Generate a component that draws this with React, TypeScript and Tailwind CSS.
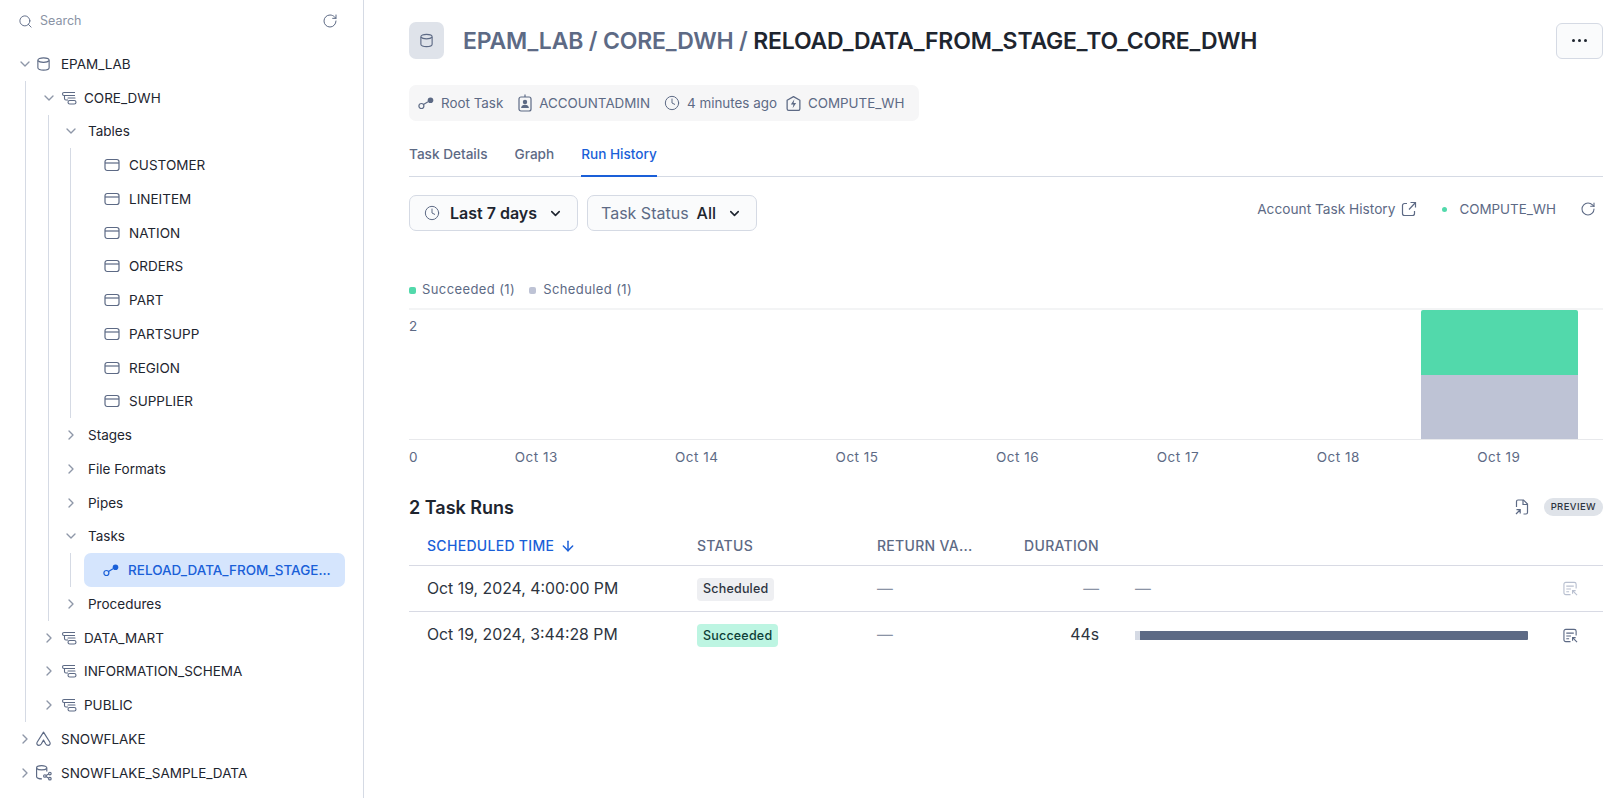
import type { ReactNode } from "react";
import { ChevronDown, ChevronRight, Clock, RotateCw, Search, ArrowDown } from "lucide-react";

const tables = ["CUSTOMER", "LINEITEM", "NATION", "ORDERS", "PART", "PARTSUPP", "REGION", "SUPPLIER"];
const days = ["Oct 13", "Oct 14", "Oct 15", "Oct 16", "Oct 17", "Oct 18", "Oct 19"];

function DbIcon({ className = "w-[15px] h-[16px]" }: { className?: string }) {
  return (
    <svg viewBox="0 0 16 16" fill="none" stroke="currentColor" strokeWidth="1.2" className={className}>
      <path d="M2 4C2 2.500 4.500 1.500 8 1.500S14 2.500 14 4v8c0 1.500-2.500 2.500-6 2.500S2 13.500 2 12V4Z" />
      <path d="M2 4.500c1 1.200 3.500 1.800 6 1.800s5-.6 6-1.800" />
    </svg>
  );
}

function SchemaIcon() {
  return (
    <svg viewBox="0 0 16 16" fill="none" stroke="currentColor" strokeWidth="1.1" className="w-[16px] h-[16px] text-[#5d6a85]">
      <path d="M14 2.500H3a1.500 1.500 0 0 0 0 3h11" />
      <path d="M3.500 5.500v3a1.500 1.500 0 0 0 1.500 1.500h2" />
      <path d="M7 8h7" strokeLinecap="round" />
      <rect x="7" y="10.500" width="8" height="3.500" rx="1.750" />
    </svg>
  );
}

function TableIcon() {
  return (
    <svg viewBox="0 0 16 16" fill="none" stroke="currentColor" strokeWidth="1.2" className="w-[16px] h-[16px] text-[#5d6a85]">
      <rect x="1" y="2.500" width="14" height="11" rx="2.200" />
      <path d="M1 6h14" />
    </svg>
  );
}

function TaskIcon({ className }: { className: string }) {
  return (
    <svg viewBox="0 0 16 16" fill="none" stroke="currentColor" strokeWidth="1.2" className={className}>
      <circle cx="3.400" cy="11" r="2.500" />
      <path d="M5.500 9.600 10 6.800" />
      <circle cx="12.500" cy="5.200" r="2.800" fill="currentColor" stroke="none" />
    </svg>
  );
}

function ShareIcon() {
  return (
    <svg viewBox="0 0 16 16" fill="none" stroke="currentColor" strokeWidth="1.1" className="w-[17px] h-[17px] text-[#5d6a85]">
      <path d="M8 2 2 11.500C1.200 13 2.200 14.500 3.700 14.500c1 0 1.700-.5 2.200-1.300L8 9.500l2.100 3.700c.5.8 1.200 1.300 2.200 1.300 1.500 0 2.500-1.500 1.700-3L8 2Z" strokeLinejoin="round" />
    </svg>
  );
}

function SampleDbIcon() {
  return (
    <svg viewBox="0 0 16 16" fill="none" stroke="currentColor" strokeWidth="1.1" className="w-[17px] h-[17px] text-[#5d6a85]">
      <path d="M6.500 14C4 14 1.500 13.400 1.500 12V3.600C1.500 2.400 3.700 1.500 6.300 1.500s4.800.9 4.800 2.100V7" />
      <path d="M1.500 4.200c1 .9 3 1.300 4.800 1.300s3.800-.4 4.800-1.300" />
      <circle cx="9.300" cy="11.300" r="1.200" />
      <circle cx="14" cy="9" r="1.200" />
      <circle cx="14" cy="13.800" r="1.200" />
      <path d="M10.400 10.800 12.900 9.500M10.400 11.800 12.900 13.300" />
    </svg>
  );
}

function BadgeIcon() {
  return (
    <svg viewBox="0 0 16 18" fill="none" stroke="currentColor" strokeWidth="1.2" className="w-[16px] h-[18px] text-[#5d6a85]">
      <rect x="2" y="3" width="12" height="14" rx="2" />
      <path d="M8 .5v2.500" />
      <circle cx="8" cy="8" r="1.600" fill="currentColor" />
      <path d="M4.800 13.500c.3-1.500 1.500-2.200 3.200-2.200s2.900.7 3.200 2.200Z" fill="currentColor" />
    </svg>
  );
}

function WarehouseIcon() {
  return (
    <svg viewBox="0 0 16 16" fill="none" stroke="currentColor" strokeWidth="1.2" className="w-[17px] h-[17px] text-[#5d6a85]">
      <path d="M2 5 8 1.500 14 5v8a1.500 1.500 0 0 1-1.500 1.500h-9A1.500 1.500 0 0 1 2 13V5Z" strokeLinejoin="round" />
      <path d="M8.800 4 5.500 9h2.400l-.7 3.500L10.500 7.500H8.100L8.800 4Z" fill="currentColor" stroke="none" />
    </svg>
  );
}

function ExternalIcon() {
  return (
    <svg viewBox="0 0 16 16" fill="none" stroke="currentColor" strokeWidth="1.2" className="w-[16px] h-[16px] text-[#5d6a85]">
      <path d="M6 2.500H3.500a2 2 0 0 0-2 2v8a2 2 0 0 0 2 2h8a2 2 0 0 0 2-2V10" />
      <path d="M8 8.500 14.500 1.500M9.500 1.500h5v5" />
    </svg>
  );
}

function ExportIcon() {
  return (
    <svg viewBox="0 0 16 16" fill="none" stroke="currentColor" strokeWidth="1.2" className="w-[16px] h-[16px] text-[#5d6a85]">
      <path d="M2.500 8V2.500A1.500 1.500 0 0 1 4 1h5.500l4 4v8.500a1.500 1.500 0 0 1-1.500 1.500H9.500" />
      <path d="M9 1v4.500h4.500" />
      <path d="M2 15l4-4M2.500 10.700H6.200v3.700" />
    </svg>
  );
}

function DetailIcon({ className }: { className: string }) {
  return (
    <svg viewBox="0 0 16 16" fill="none" stroke="currentColor" strokeWidth="1.2" className={className}>
      <path d="M8 14.500H3a2 2 0 0 1-2-2v-9a2 2 0 0 1 2-2h9a2 2 0 0 1 2 2V8" />
      <path d="M3.500 5.500h8M3.500 8.500h5M3.500 11.500h3" />
      <path d="M15 15l-4.500-4.500M10.200 13.500v-3.300h3.300" />
    </svg>
  );
}

function Row({ className, children }: { className: string; children: ReactNode }) {
  return <div className={`flex items-center h-[33.76px] text-[13.5px] text-[#1e252f] whitespace-nowrap ${className}`}>{children}</div>;
}

const chev = "w-[16px] h-[16px] text-[#8e97a8] shrink-0";

function Sidebar() {
  return (
    <aside className="w-[364px] shrink-0 h-[798px] border-r border-[#d5dae4] overflow-hidden">
      <div className="flex items-center justify-between h-[47px] pl-[18px] pr-[25px] pb-[5px]">
        <div className="flex items-center gap-[7px] text-[12.5px] text-[#8a93a5]">
          <Search className="w-[15px] h-[15px] text-[#5d6a85]" strokeWidth={1.5} />
          Search
        </div>
        <RotateCw className="w-[16px] h-[16px] text-[#5d6a85]" strokeWidth={1.5} />
      </div>

      <Row className="pl-[17px]">
        <ChevronDown className={chev} />
        <span className="ml-[3px] text-[#5d6a85]"><DbIcon /></span>
        <span className="ml-[10px]">EPAM_LAB</span>
      </Row>
      <div className="ml-[25px] border-l border-[#d5dae4]">
        <Row className="pl-[15px]">
          <ChevronDown className={chev} />
          <span className="ml-[4px]"><SchemaIcon /></span>
          <span className="ml-[7px]">CORE_DWH</span>
        </Row>
        <div className="ml-[22px] border-l border-[#d5dae4]">
          <Row className="pl-[14px]">
            <ChevronDown className={chev} />
            <span className="ml-[9px]">Tables</span>
          </Row>
          <div className="ml-[21px] border-l border-[#d5dae4]">
            {tables.map((t) => (
              <Row key={t} className="pl-[33px]">
                <TableIcon />
                <span className="ml-[9px]">{t}</span>
              </Row>
            ))}
          </div>
          {["Stages", "File Formats", "Pipes"].map((t) => (
            <Row key={t} className="pl-[14px]">
              <ChevronRight className={chev} />
              <span className="ml-[9px]">{t}</span>
            </Row>
          ))}
          <Row className="pl-[14px]">
            <ChevronDown className={chev} />
            <span className="ml-[9px]">Tasks</span>
          </Row>
          <div className="ml-[21px] border-l border-[#d5dae4]">
            <div className="ml-[13px] mr-[18px] h-[33.76px] rounded-[7px] bg-[#d5e5fd] flex items-center pl-[19px] text-[13.5px] font-medium text-[#1a5fd8] whitespace-nowrap">
              <TaskIcon className="w-[16px] h-[16px] text-[#1a5fd8]" />
              <span className="ml-[9px]">RELOAD_DATA_FROM_STAGE...</span>
            </div>
          </div>
          <Row className="pl-[14px]">
            <ChevronRight className={chev} />
            <span className="ml-[9px]">Procedures</span>
          </Row>
        </div>
        {["DATA_MART", "INFORMATION_SCHEMA", "PUBLIC"].map((t) => (
          <Row key={t} className="pl-[15px]">
            <ChevronRight className={chev} />
            <span className="ml-[4px]"><SchemaIcon /></span>
            <span className="ml-[7px]">{t}</span>
          </Row>
        ))}
      </div>
      <Row className="pl-[17px]">
        <ChevronRight className={chev} />
        <span className="ml-[2px]"><ShareIcon /></span>
        <span className="ml-[9px]">SNOWFLAKE</span>
      </Row>
      <Row className="pl-[17px]">
        <ChevronRight className={chev} />
        <span className="ml-[2px]"><SampleDbIcon /></span>
        <span className="ml-[9px]">SNOWFLAKE_SAMPLE_DATA</span>
      </Row>
    </aside>
  );
}

function Chart() {
  return (
    <div className="mt-[49px]">
      <div className="flex items-center h-[20px] text-[13px] tracking-[0.4px] text-[#5d6a85]">
        <span className="w-[7px] h-[7px] rounded-[2px] bg-[#52d9ab]" />
        <span className="ml-[6px]">Succeeded (1)</span>
        <span className="ml-[14px] w-[7px] h-[7px] rounded-[2px] bg-[#bec3d5]" />
        <span className="ml-[7px]">Scheduled (1)</span>
      </div>
      <div className="mt-[8px] h-[132px] flex border-t-2 border-b border-t-[#f3f4f5] border-b-[#e8e9ec] pr-[17px]">
        <div className="w-[47px] pt-[6px] text-[13.5px] text-[#5d6a85]">2</div>
        <div className="flex-1 grid grid-cols-7">
          {days.map((d) => (
            <div key={d} className="flex flex-col -ml-[4px] mr-[8px]">
              {d === "Oct 19" && (
                <>
                  <div className="flex-1 bg-[#52d9ab] rounded-t-[2px]" />
                  <div className="flex-1 bg-[#bec3d5]" />
                </>
              )}
            </div>
          ))}
        </div>
      </div>
      <div className="flex h-[34px] items-center text-[13.5px] text-[#5d6a85] tracking-[0.5px] pr-[24px]">
        <div className="w-[47px]">0</div>
        <div className="flex-1 grid grid-cols-7 text-center">
          {days.map((d) => (
            <div key={d}>{d}</div>
          ))}
        </div>
      </div>
    </div>
  );
}

function RunRow({ time, status, duration, done }: { time: string; status: string; duration: string; done: boolean }) {
  return (
    <div className="flex items-center h-[46px] border-b border-[#d8dae4] last:border-b-0 text-[15.8px] text-[#2d3440]">
      <div className="w-[288px] pl-[18px]">{time}</div>
      <div className="w-[180px]">
        <span className={`inline-flex items-center h-[23px] px-[6px] rounded-[4px] text-[12.5px] font-medium tracking-[0.2px] ${done ? "bg-[#bdf5e2] text-[#0e3f38]" : "bg-[#eeeff2] text-[#2d3440]"}`}>
          {status}
        </span>
      </div>
      <div className="w-[110px] text-[#8a93a5]">—</div>
      <div className="w-[112px] text-right">
        <span className={done ? "" : "text-[#8a93a5]"}>{duration}</span>
      </div>
      <div className="w-[36px]" />
      <div className="w-[393px]">
        {done ? (
          <div className="flex h-[9px]">
            <div className="w-[5px] bg-[#d5dae4]" />
            <div className="flex-1 bg-[#5d6a85] rounded-r-[1px]" />
          </div>
        ) : (
          <span className="text-[#8a93a5]">—</span>
        )}
      </div>
      <div className="ml-[35px]">
        <DetailIcon className={done ? "w-[15px] h-[15px] text-[#5d6a85]" : "w-[15px] h-[15px] text-[#b9c0d0]"} />
      </div>
    </div>
  );
}

function RunsTable() {
  return (
    <div className="mt-[21px]">
      <div className="flex items-center justify-between h-[24px]">
        <h3 className="text-[18px] font-semibold text-[#1e252f]">2 Task Runs</h3>
        <div className="flex items-center gap-[14px]">
          <ExportIcon />
          <span className="h-[18px] px-[7px] rounded-full bg-[#dfe3e9] text-[9.5px] font-medium tracking-[0.4px] text-[#2d3440] flex items-center">PREVIEW</span>
        </div>
      </div>
      <div className="mt-[14px] flex items-center h-[33px] pb-[7px] border-b border-[#d8dae4] text-[14px] font-medium tracking-[0.3px] text-[#5d6a85]">
        <div className="w-[288px] pl-[18px] flex items-center gap-[6px] text-[#1a5fd8]">
          SCHEDULED TIME
          <ArrowDown className="w-[16px] h-[16px]" strokeWidth={2.2} />
        </div>
        <div className="w-[180px]">STATUS</div>
        <div className="w-[110px] whitespace-nowrap">RETURN VA...</div>
        <div className="w-[112px] text-right">DURATION</div>
      </div>
      <RunRow time="Oct 19, 2024, 4:00:00 PM" status="Scheduled" duration="—" done={false} />
      <RunRow time="Oct 19, 2024, 3:44:28 PM" status="Succeeded" duration="44s" done />
    </div>
  );
}

export default function App() {
  return (
    <div className="flex h-[798px] w-[1623px] overflow-hidden bg-white font-['Inter',sans-serif]">
      <Sidebar />
      <main className="flex-1 pl-[45px] pr-[20px]">
        <div className="flex items-center justify-between pt-[22px] h-[59px]">
          <div className="flex items-center">
            <div className="w-[35px] h-[37px] rounded-[7px] bg-[#dfe3ea] flex items-center justify-center text-[#5d6a85]">
              <DbIcon className="w-[15px] h-[15px]" />
            </div>
            <h1 className="ml-[19px] mt-[1px] text-[23px] tracking-[-0.18px] font-semibold text-[#5d6a85] whitespace-nowrap">
              EPAM_LAB / CORE_DWH / <span className="text-[#1e252f]">RELOAD_DATA_FROM_STAGE_TO_CORE_DWH</span>
            </h1>
          </div>
          <button className="w-[47px] h-[36px] rounded-[6px] border border-[#d5dae4] bg-[#fafbfc] flex items-center justify-center gap-[3px]">
            <span className="w-[3px] h-[3px] rounded-full bg-[#1e252f]" />
            <span className="w-[3px] h-[3px] rounded-full bg-[#1e252f]" />
            <span className="w-[3px] h-[3px] rounded-full bg-[#1e252f]" />
          </button>
        </div>

        <div className="mt-[26px] w-[510px] h-[36px] rounded-[7px] bg-[#f6f6f7] flex items-center pl-[9px] text-[13.4px] text-[#5d6a85] whitespace-nowrap">
          <TaskIcon className="w-[16px] h-[16px] text-[#5d6a85]" />
          <span className="ml-[7px]">Root Task</span>
          <span className="ml-[14px]"><BadgeIcon /></span>
          <span className="ml-[6px]">ACCOUNTADMIN</span>
          <Clock className="ml-[14px] w-[16px] h-[16px]" strokeWidth={1.5} />
          <span className="ml-[7px]">4 minutes ago</span>
          <span className="ml-[8px]"><WarehouseIcon /></span>
          <span className="ml-[6px]">COMPUTE_WH</span>
        </div>

        <div className="mt-[16px] h-[40px] flex gap-[27px] border-b border-[#d5dae4] text-[13.6px] font-medium text-[#5d6a85]">
          <div className="pt-[7px]">Task Details</div>
          <div className="pt-[7px]">Graph</div>
          <div className="pt-[7px] h-[40px] border-b-2 border-[#1a5fd8] text-[#1a5fd8]">Run History</div>
        </div>

        <div className="mt-[18px] flex items-center justify-between">
          <div className="flex gap-[9px]">
            <button className="w-[169px] h-[36px] rounded-[7px] border border-[#d5dae4] bg-[#fafbfc] flex items-center pl-[14px] text-[16px] font-semibold text-[#1e252f]">
              <Clock className="w-[16px] h-[16px] text-[#5d6a85]" strokeWidth={1.5} />
              <span className="ml-[10px]">Last 7 days</span>
              <ChevronDown className="ml-[11px] w-[15px] h-[15px]" strokeWidth={2.5} />
            </button>
            <button className="w-[170px] h-[36px] rounded-[7px] border border-[#d5dae4] bg-[#fafbfc] flex items-center pl-[13px] text-[16px] text-[#5d6a85]">
              Task Status
              <span className="ml-[8px] font-medium text-[#1e252f]">All</span>
              <ChevronDown className="ml-[11px] w-[15px] h-[15px] text-[#1e252f]" strokeWidth={2.5} />
            </button>
          </div>
          <div className="flex items-center text-[13.7px] text-[#5d6a85] -mt-[7px] mr-[7px]">
            Account Task History
            <span className="ml-[6px]"><ExternalIcon /></span>
            <span className="ml-[25px] w-[5px] h-[5px] rounded-full bg-[#52d9ab]" />
            <span className="ml-[12px] text-[13.4px]">COMPUTE_WH</span>
            <RotateCw className="ml-[24px] w-[16px] h-[16px]" strokeWidth={1.6} />
          </div>
        </div>

        <Chart />
        <RunsTable />
      </main>
    </div>
  );
}
